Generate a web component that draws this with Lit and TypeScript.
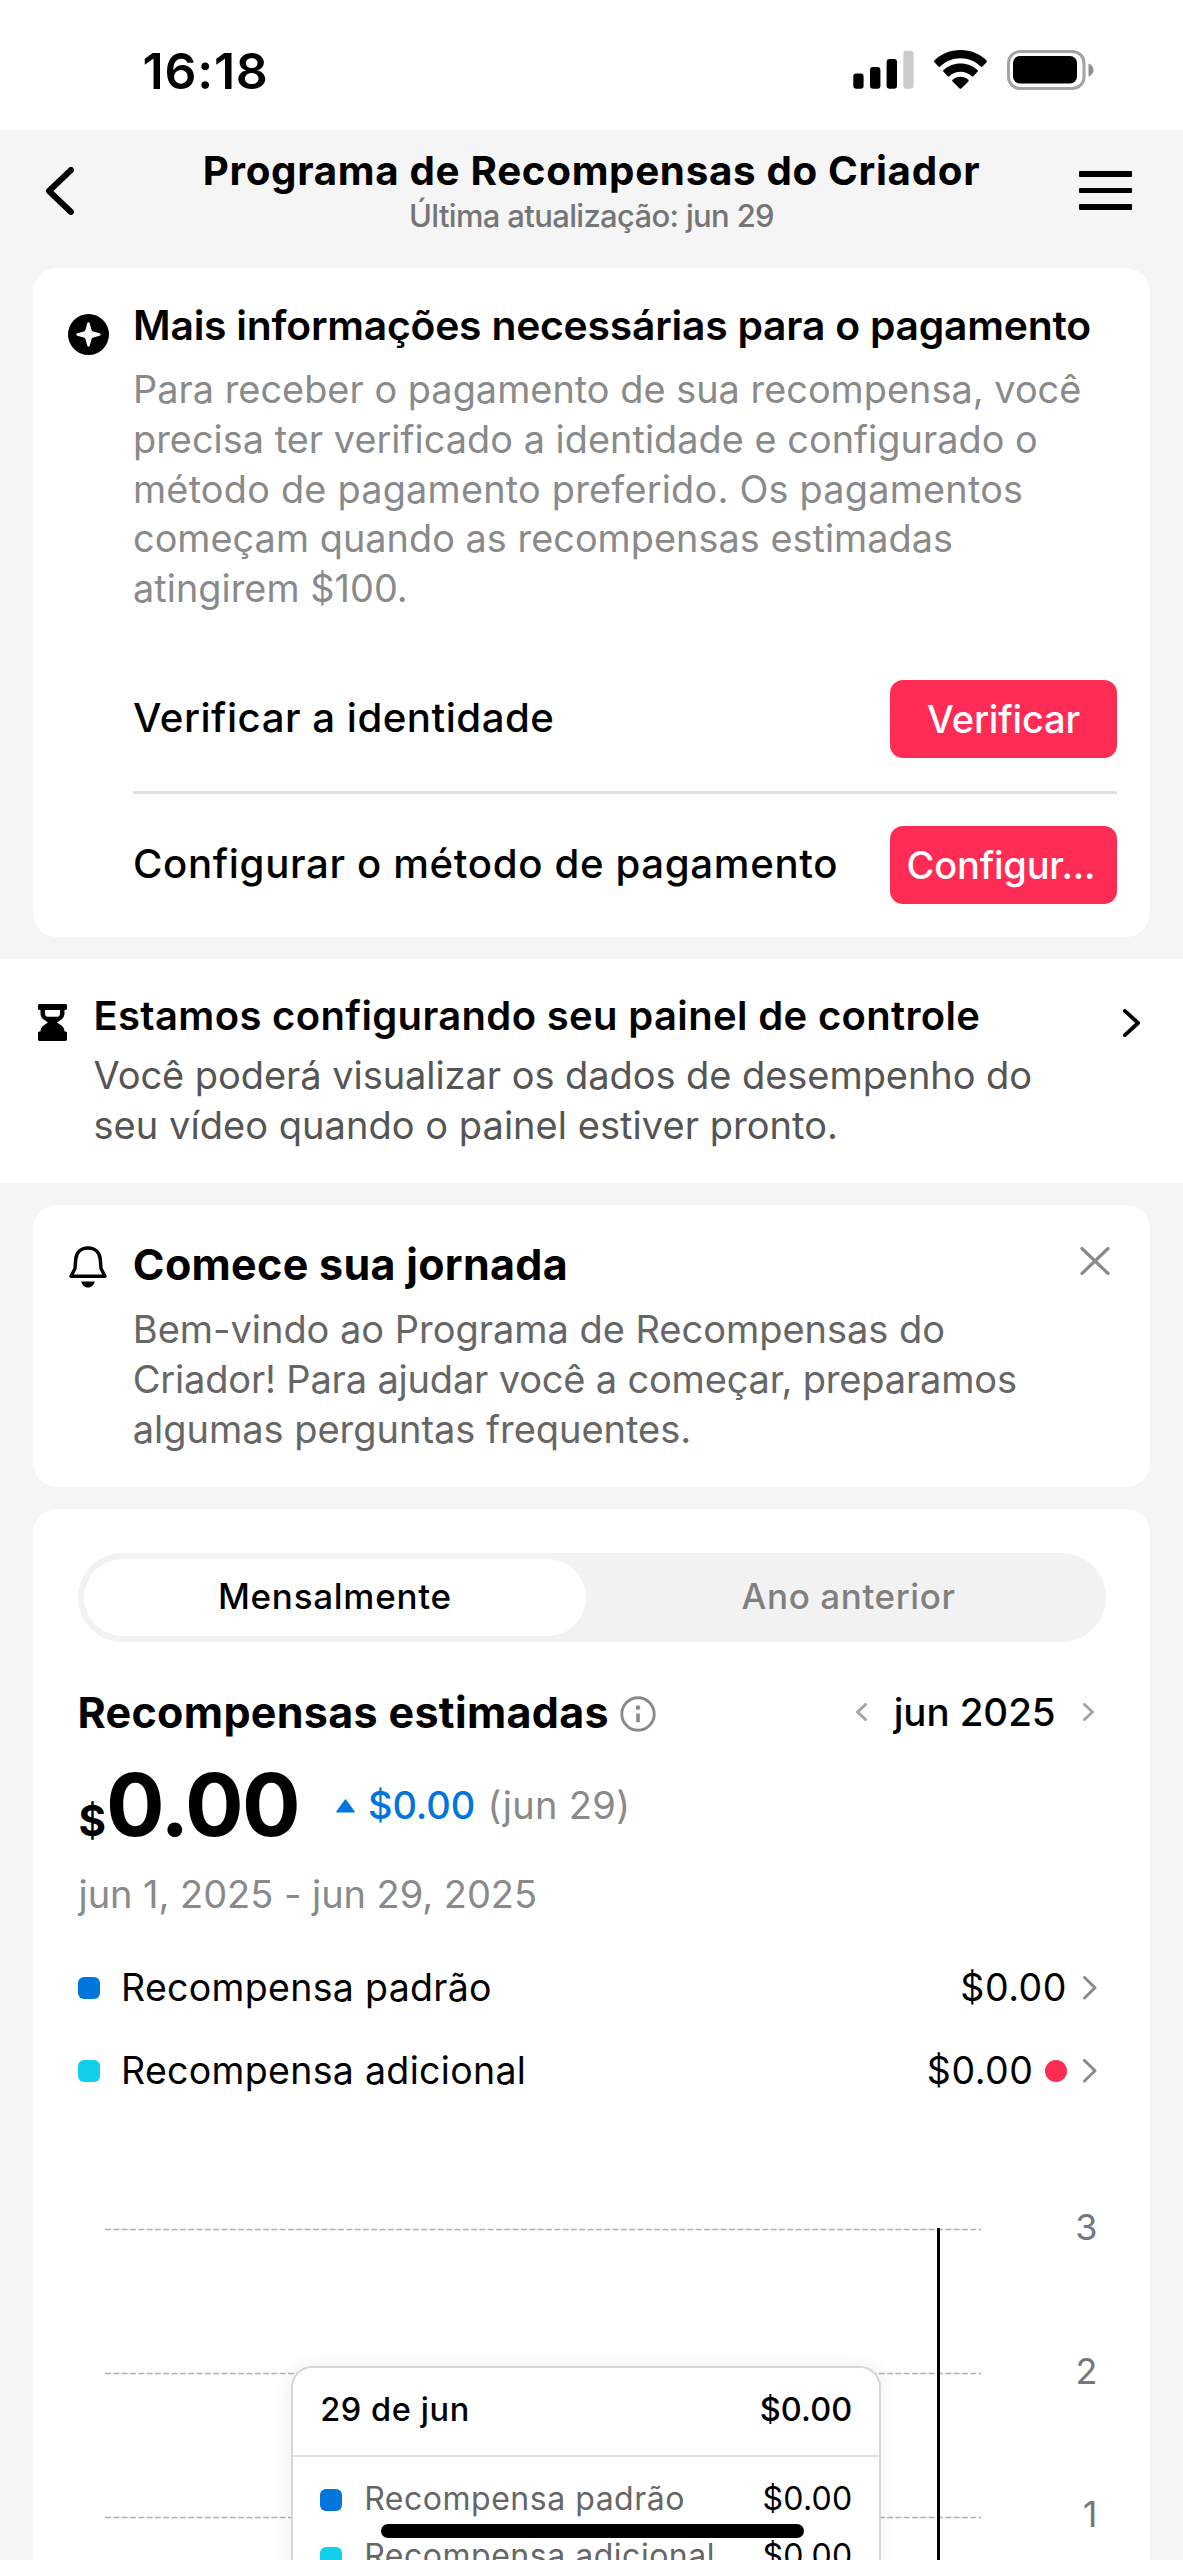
import { LitElement, html, svg, css } from "lit";
import { customElement, property, state } from "lit/decorators.js";
import { classMap } from "lit/directives/class-map.js";

const font = css`
  :host {
    box-sizing: border-box;
    font-family: "Inter", "Liberation Sans", sans-serif;
    font-kerning: normal;
    color: #000;
  }
  * {
    box-sizing: border-box;
  }
  svg {
    display: block;
    flex: none;
  }
`;

const chevron = (dir: "left" | "right", w: number, h: number, stroke: number) => {
  const p = stroke / 2;
  const a = dir === "left" ? w - p : p;
  const b = dir === "left" ? p : w - p;
  return html`<svg width=${w} height=${h} viewBox="0 0 ${w} ${h}" fill="none" stroke="currentColor" stroke-width=${stroke} stroke-linejoin="round" stroke-linecap="round">
    <path d="M${a} ${p}L${b} ${h / 2}L${a} ${h - p}" />
  </svg>`;
};

@customElement("status-bar")
export class StatusBar extends LitElement {
  static styles = [
    font,
    css`
      :host {
        display: flex;
        justify-content: space-between;
        height: 130px;
        background: #fff;
        padding: 41px 88px 0 142.5px;
      }
      .time {
        font-size: 50px;
        line-height: 60px;
        font-weight: 600;
        letter-spacing: 0.77px;
      }
      .icons {
        display: flex;
        align-items: flex-start;
        padding-top: 9px;
      }
      .wifi {
        margin: 0 20.5px 0 20px;
      }
    `,
  ];
  render() {
    return html`
      <div class="time">16:18</div>
      <div class="icons">
        <svg width="61" height="40" viewBox="0 0 61 40">
          <rect x="0.3" y="23.6" width="10.3" height="15.1" rx="3" />
          <rect x="17" y="17" width="10.4" height="21.7" rx="3" />
          <rect x="33.6" y="9" width="10.4" height="29.7" rx="3" />
          <rect x="50.3" y="0.7" width="10.3" height="38" rx="3" fill="#ccc" />
        </svg>
        <svg class="wifi" width="53" height="40" viewBox="0 0 53 40">
          <path d="M26.5 0C36.700 0 45.900 3.800 52.600 10.500c.5.500.5 1.200 0 1.700l-4.100 4.400c-.5.500-1.200.5-1.700 0C41.400 11.300 34.300 8.300 26.500 8.300S11.600 11.300 6.200 16.600c-.5.500-1.200.5-1.700 0L.4 12.200c-.5-.5-.5-1.200 0-1.700C7.100 3.800 16.300 0 26.500 0Z" />
          <path d="M26.500 13.400c6.600 0 12.600 2.500 17 6.600.5.500.5 1.300 0 1.800l-4.200 4.400c-.5.500-1.100.5-1.600.1-3-2.800-6.900-4.500-11.200-4.500s-8.200 1.700-11.200 4.500c-.5.400-1.200.4-1.600-.1l-4.200-4.400c-.5-.5-.5-1.300 0-1.800 4.400-4.100 10.400-6.600 17-6.600Z" />
          <path d="M26.500 26.800c3 0 5.700 1.100 7.800 2.900.5.500.5 1.200.1 1.700l-7.100 7c-.5.500-1.200.5-1.700 0l-7.100-7c-.4-.5-.4-1.200.1-1.700 2.200-1.800 4.900-2.900 7.900-2.900Z" />
        </svg>
        <svg width="88" height="40" viewBox="0 0 88 40">
          <rect x="1.500" y="1.500" width="75.500" height="37" rx="11.500" fill="none" stroke="#a3a3a3" stroke-width="3" />
          <rect x="6" y="6" width="64" height="27.500" rx="7" />
          <path d="M81.500 13.500c3 1 5 3.600 5 6.500s-2 5.500-5 6.500Z" fill="#8f8f8f" />
        </svg>
      </div>
    `;
  }
}

@customElement("page-header")
export class PageHeader extends LitElement {
  static styles = [
    font,
    css`
      :host {
        display: grid;
        grid-template-columns: 60px 1fr 60px;
        height: 138px;
        padding: 0 46px;
      }
      .back {
        padding-top: 37px;
      }
      .menu {
        display: flex;
        flex-direction: column;
        gap: 11px;
        align-items: flex-end;
        padding: 41px 5px 0 0;
      }
      .bar {
        width: 53px;
        height: 5.600px;
        border-radius: 1px;
        background: #000;
      }
      .titles {
        padding-top: 16.800px;
        text-align: center;
        white-space: nowrap;
      }
      .title {
        font-size: 40.300px;
        line-height: 48px;
        font-weight: 700;
        letter-spacing: 0.680px;
      }
      .sub {
        margin-top: 3px;
        font-size: 31px;
        line-height: 36px;
        font-weight: 500;
        letter-spacing: -0.660px;
        color: #757575;
      }
    `,
  ];
  render() {
    return html`
      <div class="back">${chevron("left", 28, 48, 6)}</div>
      <div class="titles">
        <div class="title">Programa de Recompensas do Criador</div>
        <div class="sub">Última atualização: jun 29</div>
      </div>
      <div class="menu">
        <div class="bar"></div>
        <div class="bar"></div>
        <div class="bar"></div>
      </div>
    `;
  }
}

@customElement("payment-card")
export class PaymentCard extends LitElement {
  static styles = [
    font,
    css`
      :host {
        display: grid;
        grid-template-columns: 41px 1fr;
        column-gap: 24px;
        margin: 0 33px;
        height: 668.700px;
        padding: 32px 33px 0 35px;
        background: #fff;
        border-radius: 24px;
        white-space: nowrap;
      }
      .icon {
        padding-top: 14px;
      }
      .title {
        font-size: 40.800px;
        line-height: 50px;
        font-weight: 600;
        letter-spacing: -0.210px;
      }
      .body {
        margin-top: 15.100px;
        margin-bottom: 66.200px;
        font-size: 37.800px;
        line-height: 49.750px;
        letter-spacing: 0.050px;
        color: #8a8a8a;
      }
      .loose {
        letter-spacing: 0.240px;
      }
      .row {
        display: flex;
        justify-content: space-between;
        align-items: center;
        height: 77.500px;
      }
      .row + .row {
        margin-top: 68.500px;
        position: relative;
      }
      .row + .row::before {
        content: "";
        position: absolute;
        left: 0;
        right: 0;
        top: -35px;
        height: 2.500px;
        background: #e0e0e0;
      }
      .label {
        padding-bottom: 3px;
        font-size: 40.200px;
        font-weight: 500;
        letter-spacing: 0.500px;
      }
      .label.wide {
        letter-spacing: 0.640px;
      }
      .btn {
        display: flex;
        align-items: center;
        justify-content: center;
        width: 227px;
        height: 77.500px;
        border-radius: 13px;
        background: #fe2c55;
        color: #fff;
        font-size: 38px;
        font-weight: 500;
        letter-spacing: -0.200px;
      }
      .btn.clipped {
        padding-right: 5px;
      }
    `,
  ];
  render() {
    return html`
      <div class="icon">
        <svg width="41" height="41" viewBox="0 0 41 41">
          <circle cx="20.500" cy="20.500" r="20.500" />
          <path fill="#fff" d="M20.500 8.300c.7 0 1.100.4 1.300 1.100l1.600 6.200c.3 1.100.9 1.700 2 2l6.200 1.600c.7.200 1.100.6 1.100 1.300s-.4 1.100-1.100 1.300l-6.200 1.600c-1.100.3-1.700.9-2 2l-1.600 6.200c-.2.700-.6 1.100-1.300 1.100s-1.100-.4-1.300-1.100l-1.600-6.200c-.3-1.100-.9-1.700-2-2l-6.200-1.600c-.7-.2-1.100-.6-1.100-1.300s.4-1.100 1.100-1.300l6.200-1.600c1.100-.3 1.700-.9 2-2l1.600-6.200c.2-.7.6-1.100 1.300-1.100Z" />
        </svg>
      </div>
      <div>
        <div class="title">Mais informações necessárias para o pagamento</div>
        <div class="body">
          Para receber o pagamento de sua recompensa, você<br />precisa ter verificado a identidade e configurado o<br /><span class="loose">método de pagamento preferido. Os pagamentos</span><br />começam quando as recompensas estimadas<br />atingirem $100.
        </div>
        <div class="row">
          <div class="label">Verificar a identidade</div>
          <div class="btn">Verificar</div>
        </div>
        <div class="row">
          <div class="label wide">Configurar o método de pagamento</div>
          <div class="btn clipped">Configur...</div>
        </div>
      </div>
    `;
  }
}

@customElement("setup-banner")
export class SetupBanner extends LitElement {
  static styles = [
    font,
    css`
      :host {
        display: grid;
        grid-template-columns: 29px 1fr 17px;
        column-gap: 26.500px;
        height: 224px;
        margin: 22.300px 0;
        padding: 32.500px 43px 0 38px;
        background: #fff;
        white-space: nowrap;
      }
      .icon {
        padding-top: 13px;
      }
      .arrow {
        padding-top: 17.500px;
      }
      .title {
        font-size: 40px;
        line-height: 50px;
        font-weight: 600;
        letter-spacing: 0.340px;
      }
      .body {
        margin-top: 9.500px;
        font-size: 38px;
        line-height: 49.900px;
        letter-spacing: -0.060px;
        color: #555;
      }
      .loose {
        letter-spacing: 0.040px;
      }
    `,
  ];
  render() {
    return html`
      <div class="icon">
        <svg width="29" height="37" viewBox="0 0 29 37">
          <path fill-rule="evenodd" d="M1.500 0h26c.8 0 1.500.6 1.500 1.400V4.600c0 .8-.7 1.400-1.500 1.400H26.500v3.600c0 2.200-1 4.200-2.700 5.600L19 18.500l4.800 3.300c1.700 1.400 2.700 3.400 2.700 5.600h1c.8 0 1.500.6 1.500 1.400v6.800c0 .8-.7 1.400-1.500 1.400h-26C.7 37 0 36.400 0 35.600V28.800c0-.8.7-1.400 1.500-1.400h1c0-2.200 1-4.200 2.700-5.600L10 18.500l-4.800-3.300C3.500 13.800 2.500 11.800 2.500 9.600V6H1.500C.7 6 0 5.400 0 4.600V1.400C0 .6.700 0 1.500 0ZM7 6v3.400c0 1.200.5 2.200 1.400 2.900l.6.500h11l.6-.5c.9-.7 1.400-1.700 1.400-2.900V6Z" />
        </svg>
      </div>
      <div>
        <div class="title">Estamos configurando seu painel de controle</div>
        <div class="body">Você poderá visualizar os dados de desempenho do<br /><span class="loose">seu vídeo quando o painel estiver pronto.</span></div>
      </div>
      <div class="arrow">${chevron("right", 17, 28, 3.8)}</div>
    `;
  }
}

@customElement("journey-card")
export class JourneyCard extends LitElement {
  static styles = [
    font,
    css`
      :host {
        display: grid;
        grid-template-columns: 38px 1fr 30px;
        column-gap: 25.500px;
        height: 282px;
        margin: 0 33px 22px;
        padding: 33px 40px 0 36.300px;
        background: #fff;
        border-radius: 24px;
        white-space: nowrap;
      }
      .icon {
        padding-top: 7.400px;
      }
      .close {
        padding-top: 8.400px;
      }
      .title {
        font-size: 43px;
        line-height: 52px;
        font-weight: 700;
        letter-spacing: 0.300px;
      }
      .body {
        margin-top: 14.800px;
        font-size: 38px;
        line-height: 49.800px;
        letter-spacing: -0.030px;
        color: #666;
      }
      .tight {
        letter-spacing: -0.180px;
      }
    `,
  ];
  render() {
    return html`
      <div class="icon">
        <svg width="38" height="42" viewBox="0 0 38 42">
          <path fill="none" stroke="#000" stroke-width="3.400" stroke-linejoin="round" d="M19 2C11.500 2 7.200 7 6.700 13.500L6 22.500 2 30.200h34L32 22.500l-.7-9C30.800 7 26.500 2 19 2Z" />
          <path d="M12.300 35.500h13.400c-.7 3.700-3.400 6-6.700 6s-6-2.300-6.700-6Z" />
        </svg>
      </div>
      <div>
        <div class="title">Comece sua jornada</div>
        <div class="body">Bem-vindo ao Programa de Recompensas do<br /><span class="tight">Criador! Para ajudar você a começar, preparamos</span><br />algumas perguntas frequentes.</div>
      </div>
      <div class="close">
        <svg width="30" height="28" viewBox="0 0 30 28" fill="none" stroke="#8a8a8a" stroke-width="3.200" stroke-linecap="round">
          <path d="M2 1.500L28 26.500M28 1.500L2 26.500" />
        </svg>
      </div>
    `;
  }
}

@customElement("reward-row")
export class RewardRow extends LitElement {
  @property() label = "";
  @property() amount = "";
  @property() tone = "standard";
  @property({ type: Boolean }) alert = false;
  static styles = [
    font,
    css`
      :host {
        display: flex;
        align-items: center;
        height: 48px;
        font-size: 37.500px;
        line-height: 48px;
        letter-spacing: 0.310px;
      }
      .swatch {
        width: 22px;
        height: 22px;
        border-radius: 6px;
        margin-right: 21.500px;
      }
      .standard {
        background: #0075dc;
      }
      .additional {
        background: #12d0e9;
      }
      .amount {
        margin-left: auto;
        letter-spacing: 0.560px;
      }
      .dot {
        width: 22px;
        height: 22px;
        border-radius: 50%;
        background: #fe2c55;
        margin-left: 11.500px;
      }
      .arrow {
        color: #8a8a8a;
        margin: 0 9.500px 0 16px;
      }
    `,
  ];
  render() {
    return html`
      <div class=${classMap({ swatch: true, [this.tone]: true })}></div>
      <div>${this.label}</div>
      <div class="amount">${this.amount}</div>
      ${this.alert ? html`<div class="dot"></div>` : null}
      <div class="arrow">${chevron("right", 13.5, 23.5, 3)}</div>
    `;
  }
}

@customElement("reward-chart")
export class RewardChart extends LitElement {
  private ticks = [
    { value: 3, y: 134.5 },
    { value: 2, y: 278.5 },
    { value: 1, y: 422.4 },
  ];
  private entries = [
    { label: "Recompensa padrão", amount: "$0.00", tone: "standard" },
    { label: "Recompensa adicional", amount: "$0.00", tone: "additional" },
  ];
  static styles = [
    font,
    css`
      :host {
        display: block;
        position: relative;
        height: 466px;
      }
      .axis {
        font-family: "Inter", "Liberation Sans", sans-serif;
        font-size: 36px;
        fill: #757680;
      }
      .tip {
        position: absolute;
        left: 257.700px;
        top: 271.300px;
        width: 590.700px;
        height: 280px;
        border: 2.600px solid #d6d6d6;
        border-radius: 21px;
        background: #fff;
        box-shadow: 0 0 20px rgba(0, 0, 0, 0.07);
        white-space: nowrap;
      }
      .head {
        display: flex;
        justify-content: space-between;
        align-items: center;
        height: 89px;
        padding: 0 27px 4px 27.500px;
        border-bottom: 2.600px solid #e0e0e0;
        font-size: 32.500px;
        font-weight: 500;
        letter-spacing: 0.590px;
      }
      .total {
        letter-spacing: 0.130px;
      }
      .list {
        display: flex;
        flex-direction: column;
        gap: 17.700px;
        padding: 21.500px 27px 0 27.500px;
      }
      .entry {
        display: flex;
        align-items: center;
        height: 40px;
        font-size: 32px;
        line-height: 40px;
      }
      .swatch {
        width: 22px;
        height: 22px;
        border-radius: 6px;
        margin: 3px 22px 0 0;
      }
      .standard {
        background: #0075dc;
      }
      .additional {
        background: #12d0e9;
      }
      .name {
        flex: 1;
        color: #666;
        letter-spacing: 0.520px;
      }
      .amount {
        letter-spacing: 0.230px;
      }
    `,
  ];
  render() {
    return html`
      <svg width="1117" height="466" viewBox="0 0 1117 466">
        ${this.ticks.map(
          (t) => svg`
            <line x1="72" x2="948.300" y1=${t.y} y2=${t.y} stroke="#b0b0b0" stroke-width="1.500" stroke-dasharray="6 2.320" />
            <text class="axis" x="1064.500" y=${t.y + 10} text-anchor="end">${t.value}</text>
          `
        )}
        <rect x="904" y="133" width="3" height="333" />
      </svg>
      <div class="tip">
        <div class="head">
          <span>29 de jun</span>
          <span class="total">$0.00</span>
        </div>
        <div class="list">
          ${this.entries.map(
            (e) => html`<div class="entry">
              <div class=${classMap({ swatch: true, [e.tone]: true })}></div>
              <div class="name">${e.label}</div>
              <div class="amount">${e.amount}</div>
            </div>`
          )}
        </div>
      </div>
    `;
  }
}

@customElement("rewards-card")
export class RewardsCard extends LitElement {
  @state() private tab = 0;
  private tabs = ["Mensalmente", "Ano anterior"];
  static styles = [
    font,
    css`
      :host {
        display: block;
        margin: 0 33px;
        padding-top: 44.200px;
        background: #fff;
        border-radius: 24px 24px 0 0;
        white-space: nowrap;
      }
      .inner {
        padding: 0 44px 0 44.500px;
      }
      .segment {
        display: grid;
        grid-template-columns: 1fr 1fr;
        gap: 11px;
        height: 89px;
        padding: 6px;
        border-radius: 44.500px;
        background: #f2f2f2;
      }
      .tab {
        display: flex;
        align-items: center;
        justify-content: center;
        padding-bottom: 3px;
        border-radius: 39px;
        font-size: 35px;
        font-weight: 500;
        letter-spacing: 0.600px;
        color: #808080;
      }
      .tab.on {
        background: #fff;
        color: #000;
        letter-spacing: 0.730px;
      }
      .heading {
        display: flex;
        align-items: center;
        height: 52px;
        margin-top: 43.800px;
      }
      .name {
        font-size: 43px;
        line-height: 52px;
        font-weight: 700;
        letter-spacing: 0.330px;
      }
      .info {
        margin: 4px 0 0 11.500px;
      }
      .period {
        display: flex;
        align-items: center;
        margin-left: auto;
        padding: 0 12px 1px 0;
        color: #a5a5a5;
      }
      .month {
        margin: 0 27.500px 0 26.500px;
        font-size: 38.500px;
        font-weight: 500;
        letter-spacing: -0.080px;
        color: #000;
      }
      .total {
        display: flex;
        align-items: center;
        height: 90px;
        margin-top: 21.300px;
      }
      .sum {
        font-size: 87px;
        line-height: 90px;
        font-weight: 700;
        letter-spacing: -1.760px;
      }
      .unit {
        font-size: 42px;
        line-height: 0;
        letter-spacing: 0;
        margin-left: 1px;
      }
      .up {
        margin: 3px 13px 0 37px;
      }
      .delta {
        font-size: 38px;
        font-weight: 500;
        letter-spacing: -0.100px;
        color: #0075dc;
      }
      .day {
        margin-left: 12.500px;
        font-size: 38px;
        letter-spacing: 0.300px;
        color: #8a8a8a;
      }
      .range {
        margin: 20.100px 0 46.300px 1px;
        font-size: 38px;
        line-height: 48px;
        letter-spacing: -0.050px;
        color: #8a8a8a;
      }
      .rows {
        display: grid;
        gap: 35px;
      }
    `,
  ];
  render() {
    return html`
      <div class="inner">
        <div class="segment">
          ${this.tabs.map((t, i) => html`<div class=${classMap({ tab: true, on: i === this.tab })} @click=${() => (this.tab = i)}>${t}</div>`)}
        </div>
        <div class="heading">
          <div class="name">Recompensas estimadas</div>
          <svg class="info" width="36" height="36" viewBox="0 0 36 36" fill="none" stroke="#8a8a8a">
            <circle cx="18" cy="18" r="16.200" stroke-width="2.900" />
            <path d="M18 17.500v8.700" stroke-width="3.600" />
            <circle cx="18" cy="11.600" r="2.300" fill="#8a8a8a" stroke="none" />
          </svg>
          <div class="period">
            ${chevron("left", 11, 18, 3)}
            <div class="month">jun 2025</div>
            ${chevron("right", 11, 18, 3)}
          </div>
        </div>
        <div class="total">
          <div class="sum"><span class="unit">$</span>0.00</div>
          <svg class="up" width="19" height="14" viewBox="0 0 19 14">
            <path fill="#0075dc" d="M8.600.9a1.100 1.100 0 0 1 1.800 0L18.600 12.200c.5.700.2 1.300-.7 1.300H1.100c-.9 0-1.200-.6-.7-1.300Z" />
          </svg>
          <div class="delta">$0.00</div>
          <div class="day">(jun 29)</div>
        </div>
        <div class="range">jun 1, 2025 - jun 29, 2025</div>
        <div class="rows">
          <reward-row label="Recompensa padrão" amount="$0.00" tone="standard"></reward-row>
          <reward-row label="Recompensa adicional" amount="$0.00" tone="additional" alert></reward-row>
        </div>
      </div>
      <reward-chart></reward-chart>
    `;
  }
}

@customElement("app-root")
export class AppRoot extends LitElement {
  static styles = css`
    :host {
      display: block;
      position: relative;
      width: 1183px;
      height: 2560px;
      overflow: hidden;
      background: #f5f5f5;
    }
    .home {
      position: absolute;
      left: 380.500px;
      bottom: 22px;
      width: 423px;
      height: 14.300px;
      border-radius: 7.150px;
      background: #000;
    }
  `;
  render() {
    return html`
      <status-bar></status-bar>
      <page-header></page-header>
      <payment-card></payment-card>
      <setup-banner></setup-banner>
      <journey-card></journey-card>
      <rewards-card></rewards-card>
      <div class="home"></div>
    `;
  }
}
